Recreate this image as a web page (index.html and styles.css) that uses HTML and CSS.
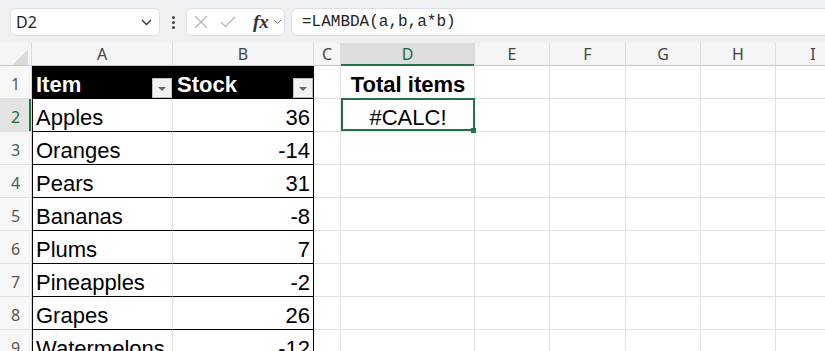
FILE: index.html
```html
<html>

<head>
	<link rel="stylesheet" href="styles.css">
</head>

<body>
	<div class="toolbar">
		<div class="namebox">
			<span>D2</span>
			<svg width="11" height="7" viewBox="0 0 11 7"><path d="M1 1 L5.5 5.5 L10 1" fill="none" stroke="#333" stroke-width="1.3" /></svg>
		</div>
		<div class="kebab"><i></i><i></i><i></i></div>
		<div class="fxbox">
			<svg width="14" height="14" viewBox="0 0 14 14"><path d="M1 1 L13 13 M13 1 L1 13" stroke="#b4b4b4" stroke-width="1.2" /></svg>
			<svg width="16" height="12" viewBox="0 0 16 12"><path d="M1 6 L5.5 10.5 L15 1" fill="none" stroke="#b4b4b4" stroke-width="1.2" /></svg>
			<span class="fx">fx</span>
			<svg width="9" height="6" viewBox="0 0 9 6"><path d="M1 1 L4.5 4.5 L8 1" fill="none" stroke="#777" stroke-width="1" /></svg>
		</div>
		<div class="formula">=LAMBDA(a,b,a*b)</div>
	</div>

	<div class="sheet">
		<div class="row colheads">
			<div class="corner"></div>
			<div class="ch">A</div>
			<div class="ch">B</div>
			<div class="ch">C</div>
			<div class="ch on">D</div>
			<div class="ch">E</div>
			<div class="ch">F</div>
			<div class="ch">G</div>
			<div class="ch">H</div>
			<div class="ch">I</div>
		</div>

		<div class="row">
			<div class="rh">1</div>
			<div class="c ta th">Item<span class="filter"></span></div>
			<div class="c tb th">Stock<span class="filter"></span></div>
			<div class="c"></div>
			<div class="c mid bold">Total items</div>
			<div class="c"></div><div class="c"></div><div class="c"></div><div class="c"></div><div class="c"></div>
		</div>

		<div class="row">
			<div class="rh on">2</div>
			<div class="c ta">Apples</div>
			<div class="c tb">36</div>
			<div class="c"></div>
			<div class="c mid sel">#CALC!</div>
			<div class="c"></div><div class="c"></div><div class="c"></div><div class="c"></div><div class="c"></div>
		</div>

		<div class="row">
			<div class="rh">3</div>
			<div class="c ta">Oranges</div>
			<div class="c tb">-14</div>
			<div class="c"></div><div class="c"></div><div class="c"></div><div class="c"></div><div class="c"></div><div class="c"></div><div class="c"></div>
		</div>

		<div class="row">
			<div class="rh">4</div>
			<div class="c ta">Pears</div>
			<div class="c tb">31</div>
			<div class="c"></div><div class="c"></div><div class="c"></div><div class="c"></div><div class="c"></div><div class="c"></div><div class="c"></div>
		</div>

		<div class="row">
			<div class="rh">5</div>
			<div class="c ta">Bananas</div>
			<div class="c tb">-8</div>
			<div class="c"></div><div class="c"></div><div class="c"></div><div class="c"></div><div class="c"></div><div class="c"></div><div class="c"></div>
		</div>

		<div class="row">
			<div class="rh">6</div>
			<div class="c ta">Plums</div>
			<div class="c tb">7</div>
			<div class="c"></div><div class="c"></div><div class="c"></div><div class="c"></div><div class="c"></div><div class="c"></div><div class="c"></div>
		</div>

		<div class="row">
			<div class="rh">7</div>
			<div class="c ta">Pineapples</div>
			<div class="c tb">-2</div>
			<div class="c"></div><div class="c"></div><div class="c"></div><div class="c"></div><div class="c"></div><div class="c"></div><div class="c"></div>
		</div>

		<div class="row">
			<div class="rh">8</div>
			<div class="c ta">Grapes</div>
			<div class="c tb">26</div>
			<div class="c"></div><div class="c"></div><div class="c"></div><div class="c"></div><div class="c"></div><div class="c"></div><div class="c"></div>
		</div>

		<div class="row">
			<div class="rh">9</div>
			<div class="c ta">Watermelons</div>
			<div class="c tb">-12</div>
			<div class="c"></div><div class="c"></div><div class="c"></div><div class="c"></div><div class="c"></div><div class="c"></div><div class="c"></div>
		</div>
	</div>
</body>

</html>
```

FILE: styles.css
```css
body {
	margin: 0;
	width: 825px;
	height: 351px;
	overflow: hidden;
	background-color: #fff;
	font-family: "Liberation Sans", Arial, sans-serif;
}

/* formula bar */
.toolbar {
	display: flex;
	align-items: flex-start;
	height: 43px;
	box-sizing: border-box;
	padding: 8px 0 0 10px;
	background-color: #eef1f4;
}

.namebox {
	width: 150px;
	height: 28px;
	box-sizing: border-box;
	display: flex;
	align-items: center;
	justify-content: space-between;
	padding: 0 7px 0 5px;
	background-color: #fff;
	border: 1px solid #dcdfe3;
	border-radius: 6px;
	font-family: "Noto Sans", sans-serif;
	font-size: 16px;
	color: #222;
}

.kebab {
	width: 26px;
	height: 28px;
	display: flex;
	flex-direction: column;
	align-items: center;
	justify-content: center;
	gap: 2px;
}

.kebab i {
	width: 3px;
	height: 3px;
	border-radius: 50%;
	background-color: #444;
}

.fxbox {
	width: 99px;
	height: 28px;
	box-sizing: border-box;
	display: flex;
	align-items: center;
	padding-left: 7px;
	background-color: #fff;
	border: 1px solid #dcdfe3;
	border-radius: 6px;
}

.fxbox svg:nth-child(2) {
	margin-left: 12px;
}

.fx {
	margin-left: 17px;
	margin-right: 4px;
	font-family: "Liberation Serif", serif;
	font-style: italic;
	font-weight: bold;
	font-size: 19px;
	color: #333;
}

.formula {
	flex: 1;
	height: 28px;
	box-sizing: border-box;
	margin-left: 6px;
	padding-left: 10px;
	background-color: #fff;
	border: 1px solid #dcdfe3;
	border-right: none;
	border-radius: 6px 0 0 6px;
	font-family: "Liberation Mono", monospace;
	font-size: 16px;
	line-height: 26px;
	color: #222;
}

/* grid */
.row {
	display: grid;
	grid-template-columns: 32px 141px 141px 27px 134px 75px 76px 75px 75px 75px;
	height: 33px;
}

.colheads {
	height: 23px;
	box-sizing: border-box;
	background-color: #f5f5f5;
	border-bottom: 1px solid #c6c6c6;
}

.corner {
	border-right: 1px solid #d6d6d6;
	background-image: linear-gradient(to bottom right, transparent 50%, #dadada 50%);
	background-size: 15px 16px;
	background-position: right 3px bottom 1px;
	background-repeat: no-repeat;
}

.ch {
	border-right: 1px solid #dcdcdc;
	text-align: center;
	font-family: "Noto Sans", sans-serif;
	font-size: 16px;
	line-height: 23px;
	color: #444;
}

.ch.on {
	background-color: #dcdcdc;
	color: #1c6b3b;
	box-shadow: inset 0 -2px 0 #217346;
}

.rh {
	display: flex;
	align-items: flex-end;
	justify-content: center;
	padding-bottom: 5px;
	box-sizing: border-box;
	background-color: #f7f7f7;
	border-right: 1px solid #d6d6d6;
	border-bottom: 1px solid #e1e1e1;
	font-family: "Noto Sans", sans-serif;
	font-size: 16px;
	line-height: 18px;
	color: #555;
}

.rh.on {
	background-color: #e3e3e3;
	color: #1c6b3b;
	box-shadow: inset -2px 0 0 #217346;
}

.c {
	display: flex;
	align-items: flex-end;
	box-sizing: border-box;
	padding: 0 3px 1px 4px;
	border-right: 1px solid #e1e1e1;
	border-bottom: 1px solid #e1e1e1;
	font-size: 22px;
	line-height: 25px;
	color: #000;
	white-space: nowrap;
	overflow: hidden;
}

.ta {
	padding-left: 3px;
	border-left: 1px solid #000;
	border-bottom-color: #000;
}

.tb {
	justify-content: flex-end;
	border-right-color: #000;
	border-bottom-color: #000;
}

.th {
	justify-content: space-between;
	padding-right: 0;
	padding-bottom: 0;
	background-color: #000;
	border-right-color: #000;
	color: #fff;
	font-weight: bold;
	line-height: 26px;
}

.filter {
	width: 20px;
	height: 20px;
	box-sizing: border-box;
	display: flex;
	align-items: center;
	justify-content: center;
	background-color: #f2f2f2;
	border: 1px solid #bdbdbd;
}

.filter::after {
	content: "";
	border-left: 4px solid transparent;
	border-right: 4px solid transparent;
	border-top: 4px solid #666;
	margin-top: 1px;
}

.mid {
	justify-content: center;
}

.bold {
	font-weight: bold;
}

.sel {
	position: relative;
	overflow: visible;
}

.sel::after {
	content: "";
	position: absolute;
	left: 0;
	top: -1px;
	right: -1px;
	bottom: 0;
	border: 2px solid #217346;
}

.sel::before {
	content: "";
	position: absolute;
	right: -2px;
	bottom: -2px;
	width: 5px;
	height: 5px;
	background-color: #217346;
	z-index: 1;
}
```
